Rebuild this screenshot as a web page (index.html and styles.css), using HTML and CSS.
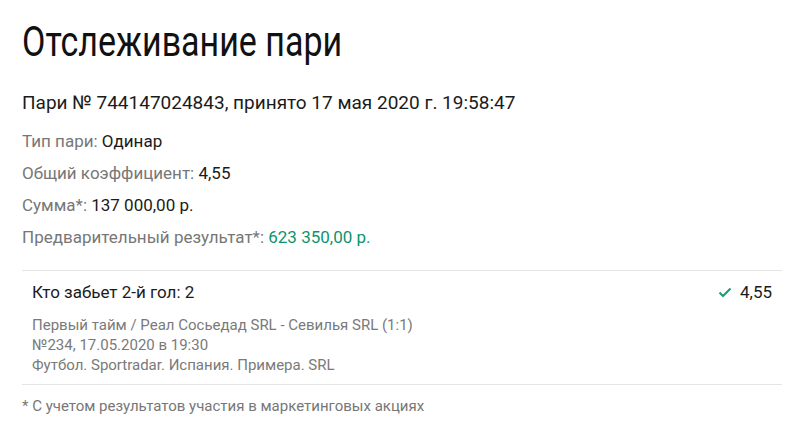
FILE: index.html
```html
<!DOCTYPE html>
<html lang="ru">
<head>
<meta charset="utf-8">
<title>Отслеживание пари</title>
<link rel="stylesheet" href="styles.css">
</head>
<body>
<main class="page">
  <h1 class="title">Отслеживание пари</h1>
  <p class="bet-head">Пари № 744147024843, принято 17 мая 2020 г. 19:58:47</p>
  <ul class="props">
    <li><span class="label">Тип пари:</span> Одинар</li>
    <li><span class="label">Общий коэффициент:</span> 4,55</li>
    <li><span class="label">Сумма*:</span> 137 000,00 р.</li>
    <li><span class="label">Предварительный результат*:</span> <span class="win">623 350,00 р.</span></li>
  </ul>
  <section class="event">
    <div class="event-top">
      <div class="event-name">Кто забьет 2-й гол: 2</div>
      <div class="event-coef">
        <svg class="check" width="14" height="11" viewBox="0 0 14 11"><path d="M1.5 5.5 L5 9 L12.5 1.5" fill="none" stroke="#1a9c6f" stroke-width="2"/></svg>
        <span>4,55</span>
      </div>
    </div>
    <div class="event-info">
      <div>Первый тайм / Реал Сосьедад SRL - Севилья SRL (1:1)</div>
      <div>№234, 17.05.2020 в 19:30</div>
      <div>Футбол. Sportradar. Испания. Примера. SRL</div>
    </div>
  </section>
  <p class="note">* С учетом результатов участия в маркетинговых акциях</p>
</main>
</body>
</html>
```
FILE: styles.css
```css
html, body {
  margin: 0;
  padding: 0;
  background: #fff;
}
body {
  font-family: Roboto, "Noto Sans", sans-serif;
  color: #1b1b1b;
}
.page {
  padding: 14px 18px 0 22px;
}
.title {
  margin: 0;
  font-size: 42px;
  font-weight: 400;
  line-height: 56px;
  color: #111;
  transform: scaleX(0.81);
  transform-origin: left center;
  white-space: nowrap;
}
.bet-head {
  margin: 20px 0 0;
  font-size: 19px;
  line-height: 26px;
}
.props {
  list-style: none;
  margin: 9px 0 0;
  padding: 0;
}
.props li {
  font-size: 17px;
  line-height: 32px;
}
.label {
  color: #777;
}
.win {
  color: #0b9470;
}
.event {
  margin-top: 17px;
  border-top: 1px solid #e5e5e5;
  border-bottom: 1px solid #e5e5e5;
  padding: 10px 0 9px 10px;
}
.event-top {
  display: flex;
  justify-content: space-between;
  align-items: center;
  padding-right: 10px;
}
.event-name {
  font-size: 17px;
  line-height: 22px;
}
.event-coef {
  display: flex;
  align-items: center;
  gap: 8px;
  font-size: 17px;
  line-height: 22px;
}
.event-info {
  margin-top: 12px;
  font-size: 15px;
  line-height: 20px;
  color: #7a7a7a;
}
.note {
  margin: 11px 0 0;
  font-size: 15px;
  line-height: 20px;
  color: #777;
}
```
